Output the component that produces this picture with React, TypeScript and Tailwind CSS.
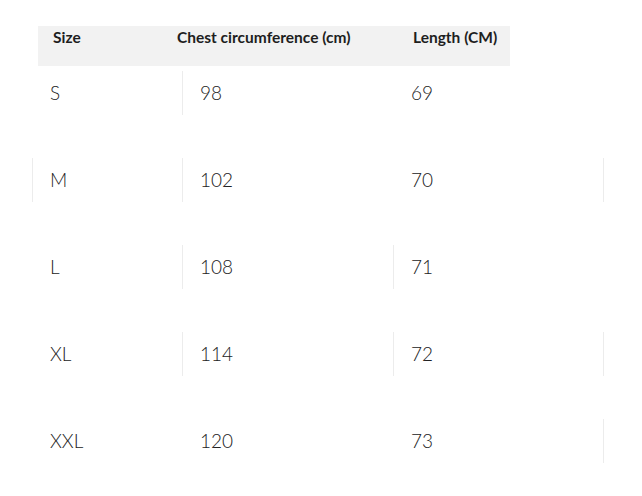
const rows = [
  { size: "S", chest: "98", length: "69", lines: [false, true, false, false] },
  { size: "M", chest: "102", length: "70", lines: [true, true, false, true] },
  { size: "L", chest: "108", length: "71", lines: [false, true, true, false] },
  { size: "XL", chest: "114", length: "72", lines: [false, true, true, true] },
  { size: "XXL", chest: "120", length: "73", lines: [false, false, false, true] },
];

function Cell({ text, line }: { text: string; line: boolean }) {
  return (
    <div
      className={`h-[44px] flex items-center pl-[17px] border-l ${
        line ? "border-[#ececec]" : "border-transparent"
      }`}
    >
      {text}
    </div>
  );
}

export default function App() {
  return (
    <div className="w-[642px] h-[496px] bg-white overflow-hidden font-['Lato',sans-serif]">
      {/* Header */}
      <div className="mt-[26px] ml-[38px] w-[472px] h-[40px] bg-[#f2f2f2] pl-[15px] pt-[1px] grid grid-cols-[124px_236px_1fr] text-[15.5px] leading-5 font-bold text-[#1e1e1e]">
        <span>Size</span>
        <span>Chest circumference (cm)</span>
        <span>Length (CM)</span>
      </div>

      {/* Body */}
      <div className="mt-[5px] ml-[32px] text-[19px] font-light text-[#222]">
        {rows.map((r) => (
          <div key={r.size} className="h-[87px] grid grid-cols-[150px_211px_210px_20px]">
            <Cell text={r.size} line={r.lines[0]} />
            <Cell text={r.chest} line={r.lines[1]} />
            <Cell text={r.length} line={r.lines[2]} />
            <Cell text="" line={r.lines[3]} />
          </div>
        ))}
      </div>
    </div>
  );
}
